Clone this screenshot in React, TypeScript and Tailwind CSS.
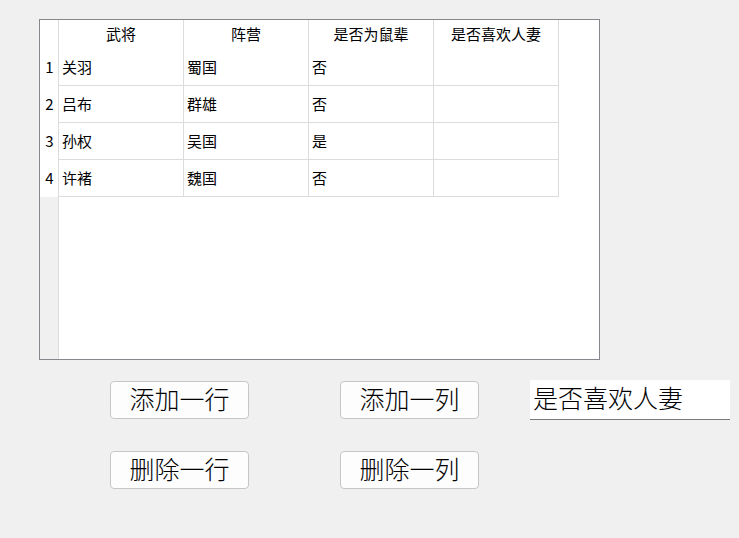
import React from "react";

const headers = ["武将", "阵营", "是否为鼠辈", "是否喜欢人妻"];
const rows = [
  ["关羽", "蜀国", "否", ""],
  ["吕布", "群雄", "否", ""],
  ["孙权", "吴国", "是", ""],
  ["许褚", "魏国", "否", ""],
];

const font = { fontFamily: '"Noto Sans CJK SC", "Noto Sans", sans-serif' };

function Btn({ label }: { label: string }) {
  return (
    <button className="w-[139px] h-[38px] rounded-[4px] border border-[#c6c6c6] bg-[#fdfdfd] text-[25px] leading-none text-black flex items-center justify-center font-light pb-[4px]">
      {label}
    </button>
  );
}

export default function App() {
  return (
    <div
      className="w-[739px] h-[538px] bg-[#f0f0f0] overflow-hidden text-black font-['Noto_Sans_CJK_SC',sans-serif]"
      style={font}
    >
      <div className="pt-[19px] pl-[39px]">
        <div className="w-[561px] h-[341px] border border-[#85878c] bg-white flex">
          {/* row header */}
          <div className="w-[19px] flex flex-col border-r border-[#dcdcdc]">
            <div className="h-[29px] bg-white shrink-0" />
            {rows.map((_, i) => (
              <div
                key={i}
                className="h-[37px] shrink-0 bg-white flex items-center justify-center text-[15px] pl-[1px]"
              >
                {i + 1}
              </div>
            ))}
            <div className="flex-1 bg-[#f0f0f0]" />
          </div>
          {/* columns */}
          <div className="flex flex-col">
            <div className="flex h-[29px] shrink-0">
              {headers.map((h) => (
                <div
                  key={h}
                  className="w-[125px] border-r border-[#dcdcdc] flex items-center justify-center text-[15px] pb-[1px]"
                >
                  {h}
                </div>
              ))}
            </div>
            {rows.map((r, i) => (
              <div key={i} className="flex h-[37px] shrink-0">
                {r.map((c, j) => (
                  <div
                    key={j}
                    className="w-[125px] border-r border-b border-[#dcdcdc] flex items-center pl-[3px] text-[15px]"
                  >
                    {c}
                  </div>
                ))}
              </div>
            ))}
          </div>
        </div>
      </div>

      <div className="flex items-start mt-[20px] pl-[110px]">
        <div className="mt-[1px]">
          <Btn label="添加一行" />
        </div>
        <div className="mt-[1px] ml-[91px]">
          <Btn label="添加一列" />
        </div>
        <div className="ml-[51px] w-[200px] h-[40px] bg-white border-b border-[#7a7a7a] flex items-center pl-[3px] pb-[4px] text-[25px] leading-none font-light">
          是否喜欢人妻
        </div>
      </div>

      <div className="flex items-start mt-[31px] pl-[110px]">
        <Btn label="删除一行" />
        <div className="ml-[91px]">
          <Btn label="删除一列" />
        </div>
      </div>
    </div>
  );
}
